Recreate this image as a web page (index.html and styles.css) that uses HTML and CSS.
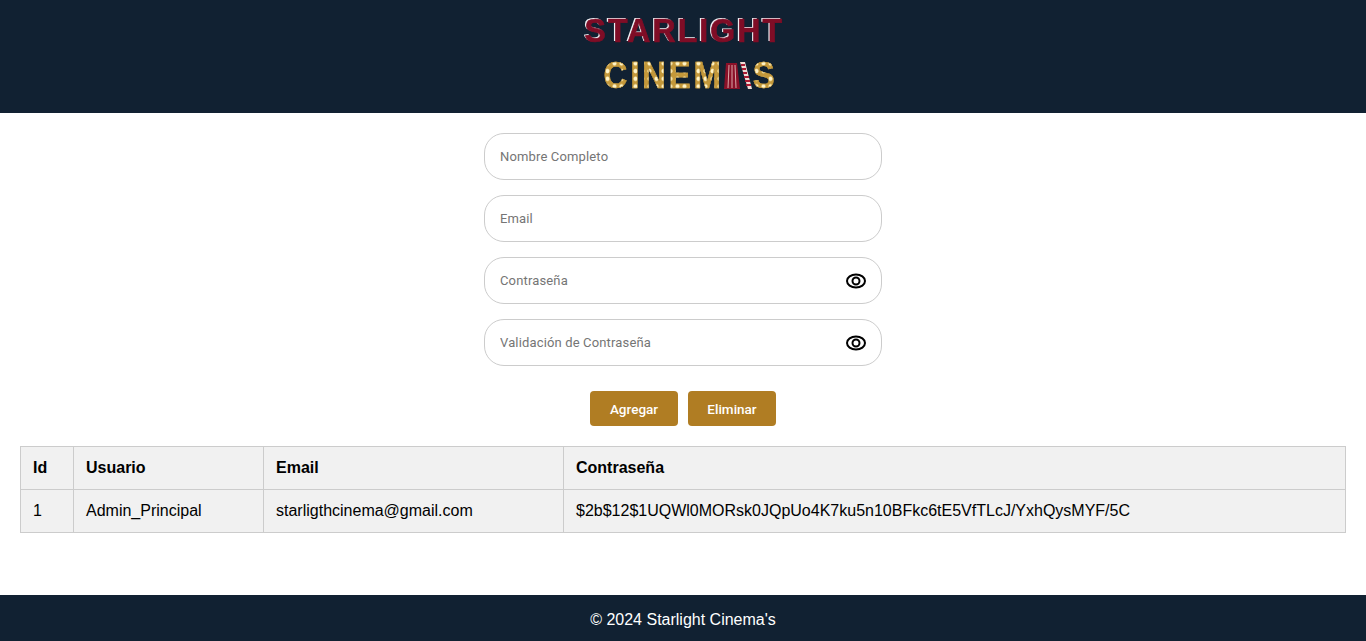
FILE: index.html
```html
<!DOCTYPE html>
<html lang="es">
<head>
<meta charset="utf-8">
<title>Starlight Cinema's</title>
<link rel="stylesheet" href="styles.css">
</head>
<body>

<header class="top">
  <div class="logo">
    <div class="logo-a">STARLIGHT</div>
    <div class="logo-b">
      <span class="bulbs">CINEM</span>
      <svg class="curtain" width="30" height="30" viewBox="0 0 30 30">
        <path d="M3 2h11l3 26H1z" fill="#8a1028"/>
        <path d="M6 4 5 27M9 4v23M12 4l1 23" stroke="#d9a9a9" stroke-width="1" fill="none"/>
        <path d="M17 1h5l7 27h-4z" fill="#f1dcd6"/>
        <path d="M18 4h4M19 8h4M20 12h4M21 16h5M22 20h5M23 24h5" stroke="#a81b33" stroke-width="2" fill="none"/>
      </svg>
      <span class="bulbs">S</span>
    </div>
  </div>
</header>

<main>
  <form class="fields">
    <div class="field"><input type="text" placeholder="Nombre Completo"></div>
    <div class="field"><input type="text" placeholder="Email"></div>
    <div class="field">
      <input type="password" placeholder="Contraseña">
      <svg class="eye" width="22" height="18" viewBox="0 0 22 18"><ellipse cx="11" cy="9" rx="9" ry="6.500" fill="none" stroke="#000" stroke-width="2"/><circle cx="11" cy="9" r="3.500" fill="none" stroke="#000" stroke-width="2"/></svg>
    </div>
    <div class="field">
      <input type="password" placeholder="Validación de Contraseña">
      <svg class="eye" width="22" height="18" viewBox="0 0 22 18"><ellipse cx="11" cy="9" rx="9" ry="6.500" fill="none" stroke="#000" stroke-width="2"/><circle cx="11" cy="9" r="3.500" fill="none" stroke="#000" stroke-width="2"/></svg>
    </div>
    <div class="buttons">
      <button type="button">Agregar</button>
      <button type="button">Eliminar</button>
    </div>
  </form>

  <table>
    <tr>
      <th class="c-id">Id</th>
      <th class="c-user">Usuario</th>
      <th class="c-email">Email</th>
      <th>Contraseña</th>
    </tr>
    <tr>
      <td>1</td>
      <td>Admin_Principal</td>
      <td>starligthcinema@gmail.com</td>
      <td>$2b$12$1UQWl0MORsk0JQpUo4K7ku5n10BFkc6tE5VfTLcJ/YxhQysMYF/5C</td>
    </tr>
  </table>
</main>

<footer class="bottom">© 2024 Starlight Cinema's</footer>

</body>
</html>
```

FILE: styles.css
```css
html, body {margin:0; padding:0;}
body {
 background: #fff;
 color: #000;
 font: normal 16px "Liberation Sans", Arial, sans-serif;
}

.top {
 height: 113px;
 background: #112132;
 display: flex;
 justify-content: center;
}
.logo {width: 198px; margin-left: 1px; padding-top: 13px;}
.logo-a {
 height: 36px;
 font: bold 32px/36px "Liberation Sans", Arial, sans-serif;
 letter-spacing: 2.100px;
 white-space: nowrap;
 color: #7f0d26;
 text-shadow: -1.5px -1px 0 #f0f0f4;
 -webkit-text-stroke: 0.7px #7f0d26;
 transform: scaleY(1.05);
 transform-origin: 0 60%;
}
.logo-b {
 display: flex;
 align-items: center;
 height: 30px;
 margin: 12px 0 0 19px;
 font: bold 33px/30px "Liberation Sans", Arial, sans-serif;
 letter-spacing: 2.800px;
}
.bulbs {
 color: transparent;
 background: radial-gradient(circle, #fff4c8 0, #fff4c8 1.5px, transparent 2.500px) 0 0/7px 7px, #c4983a;
 -webkit-background-clip: text;
 background-clip: text;
 -webkit-text-stroke: 0.4px #c4983a;
 transform: scaleY(1.1);
}
.curtain {margin-left: -1px; flex: none;}

.fields {
 width: 398px;
 margin: 20px auto 0;
}
.field {position: relative; margin-bottom: 15px;}
.field input {
 display: block;
 box-sizing: border-box;
 width: 100%;
 height: 47px;
 padding: 0 15px;
 border: 1px solid #ccc;
 border-radius: 20px;
 background: #fff;
 font: 13px Roboto, sans-serif;
 letter-spacing: 0.15px;
 outline: none;
}
.field input::placeholder {color: #757575; opacity: 1;}
.eye {position: absolute; right: 15px; top: 15px;}

.buttons {
 display: flex;
 justify-content: center;
 gap: 10px;
 margin-top: 25px;
}
.buttons button {
 width: 88px;
 height: 35px;
 padding: 0;
 border: 0;
 border-radius: 4px;
 background: #b07d23;
 color: #fff;
 font: 500 13.500px Roboto, sans-serif;
}

table {
 width: 1326px;
 margin: 20px 20px 0;
 border-collapse: collapse;
 background: #f1f1f1;
}
th, td {
 height: 43px;
 padding: 0 12px;
 border: 1px solid #ccc;
 text-align: left;
 box-sizing: border-box;
}
.c-id {width: 53px;}
.c-user {width: 190px;}
.c-email {width: 300px;}

.bottom {
 height: 46px;
 margin-top: 62px;
 background: #112132;
 color: #fff;
 text-align: center;
 line-height: 50px;
}
```
